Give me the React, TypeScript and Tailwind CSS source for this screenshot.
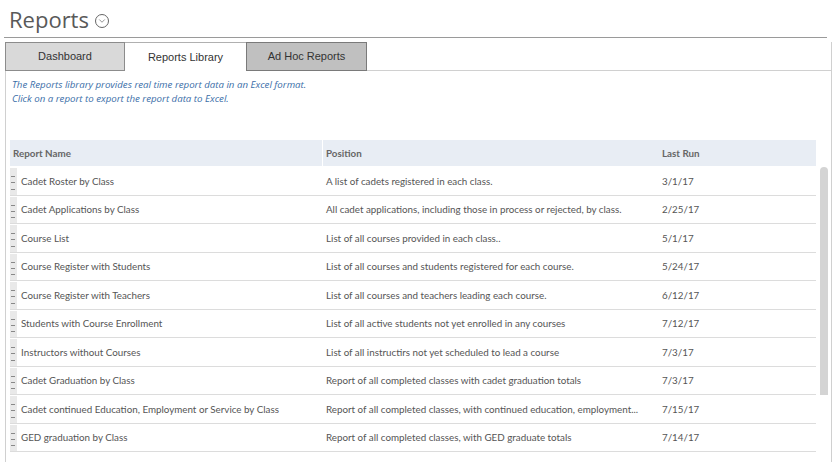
import { ChevronDown } from "lucide-react";

type Report = { name: string; position: string; lastRun: string };

const reports: Report[] = [
  { name: "Cadet Roster by Class", position: "A list of cadets registered in each class.", lastRun: "3/1/17" },
  { name: "Cadet Applications by Class", position: "All cadet applications, including those in process or rejected, by class.", lastRun: "2/25/17" },
  { name: "Course List", position: "List of all courses provided in each class..", lastRun: "5/1/17" },
  { name: "Course Register with Students", position: "List of all courses and students registered for each course.", lastRun: "5/24/17" },
  { name: "Course Register with Teachers", position: "List of all courses and teachers leading each course.", lastRun: "6/12/17" },
  { name: "Students with Course Enrollment", position: "List of all active students not yet enrolled in any courses", lastRun: "7/12/17" },
  { name: "Instructors without Courses", position: "List of all instructirs not yet scheduled to lead a course", lastRun: "7/3/17" },
  { name: "Cadet Graduation by Class", position: "Report of all completed classes with cadet graduation totals", lastRun: "7/3/17" },
  { name: "Cadet continued Education, Employment or Service by Class", position: "Report of all completed classes, with continued education, employment...", lastRun: "7/15/17" },
  { name: "GED graduation by Class", position: "Report of all completed classes, with GED graduate totals", lastRun: "7/14/17" },
];

function DragHandle() {
  return (
    <div className="flex w-[7px] flex-col items-start justify-between self-stretch bg-[#e9e9e9] pb-[5px] pl-[1px] pt-[8px]">
      <span className="h-px w-[4px] bg-[#888]" />
      <span className="h-px w-[4px] bg-[#888]" />
      <span className="h-px w-[4px] bg-[#888]" />
    </div>
  );
}

export default function App() {
  return (
    <div className="h-[462px] w-[835px] overflow-hidden bg-white">
      <div className="flex h-[37px] items-center gap-[6px] pl-[9px] pt-[1px]">
        <span className="text-[22px] leading-none text-[#595959] [font-family:'Open_Sans',sans-serif]">
          Reports
        </span>
        <span className="mt-[4px] flex h-[14px] w-[14px] items-center justify-center rounded-full border border-[#666]">
          <ChevronDown size={10} strokeWidth={1.5} className="text-[#555]" />
        </span>
      </div>
      <div className="ml-[4px] h-px w-[823px] bg-[#9a9a9a]" />

      <div className="ml-[5px] mt-[4px] flex h-[29px] w-[827px] text-[11px] text-[#333] [font-family:'Liberation_Sans',Arial,sans-serif]">
        <div className="flex w-[120px] items-center justify-center border border-[#8c8c8c] bg-[#d9d9d9]">
          Dashboard
        </div>
        <div className="flex w-[121px] items-center justify-center border-t border-[#b0b0b0] bg-white">
          Reports Library
        </div>
        <div className="flex w-[121px] items-center justify-center border border-[#7a7a7a] bg-[#c0c0c0]">
          Ad Hoc Reports
        </div>
        <div className="flex-1 border-b border-r border-[#d0d0d0]" />
      </div>

      <div className="ml-[5px] h-[400px] w-[827px] border-l border-r border-[#d0d0d0]">
        <div className="pl-[6px] pt-[7px] text-[9.7px] italic leading-[14px] text-[#3a6ea8] [font-family:'Open_Sans',sans-serif]">
          <p>The Reports library provides real time report data in an Excel format.</p>
          <p>Click on a report to export the report data to Excel.</p>
        </div>

        <div className="mt-[34px] flex gap-[4px] pl-[4px] text-[9.8px] text-[#555] [font-family:'Lato',sans-serif]">
          <div className="w-[806px]">
            <div className="flex h-[26px] items-center bg-[#e8edf4] font-bold text-[#666]">
              <div className="w-[312px] pl-[3px]">Report Name</div>
              <div className="h-full w-px bg-white" />
              <div className="w-[335px] pl-[3px]">Position</div>
              <div className="w-[158px] pl-[4px]">Last Run</div>
            </div>
            <div className="pt-px">
              {reports.map((r) => (
                <div key={r.name} className="flex h-[28.5px] items-center border-b border-[#dcdcdc] pt-[1px]">
                  <DragHandle />
                  <div className="w-[305px] pl-[4px]">{r.name}</div>
                  <div className="w-[336px] truncate pl-[4px] pr-[8px]">{r.position}</div>
                  <div className="w-[158px] pl-[4px]">{r.lastRun}</div>
                </div>
              ))}
            </div>
          </div>
          <div className="mt-[27px] h-[228px] w-[8px] rounded-t-[4px] bg-[#d4d4d4]" />
        </div>
      </div>
    </div>
  );
}
